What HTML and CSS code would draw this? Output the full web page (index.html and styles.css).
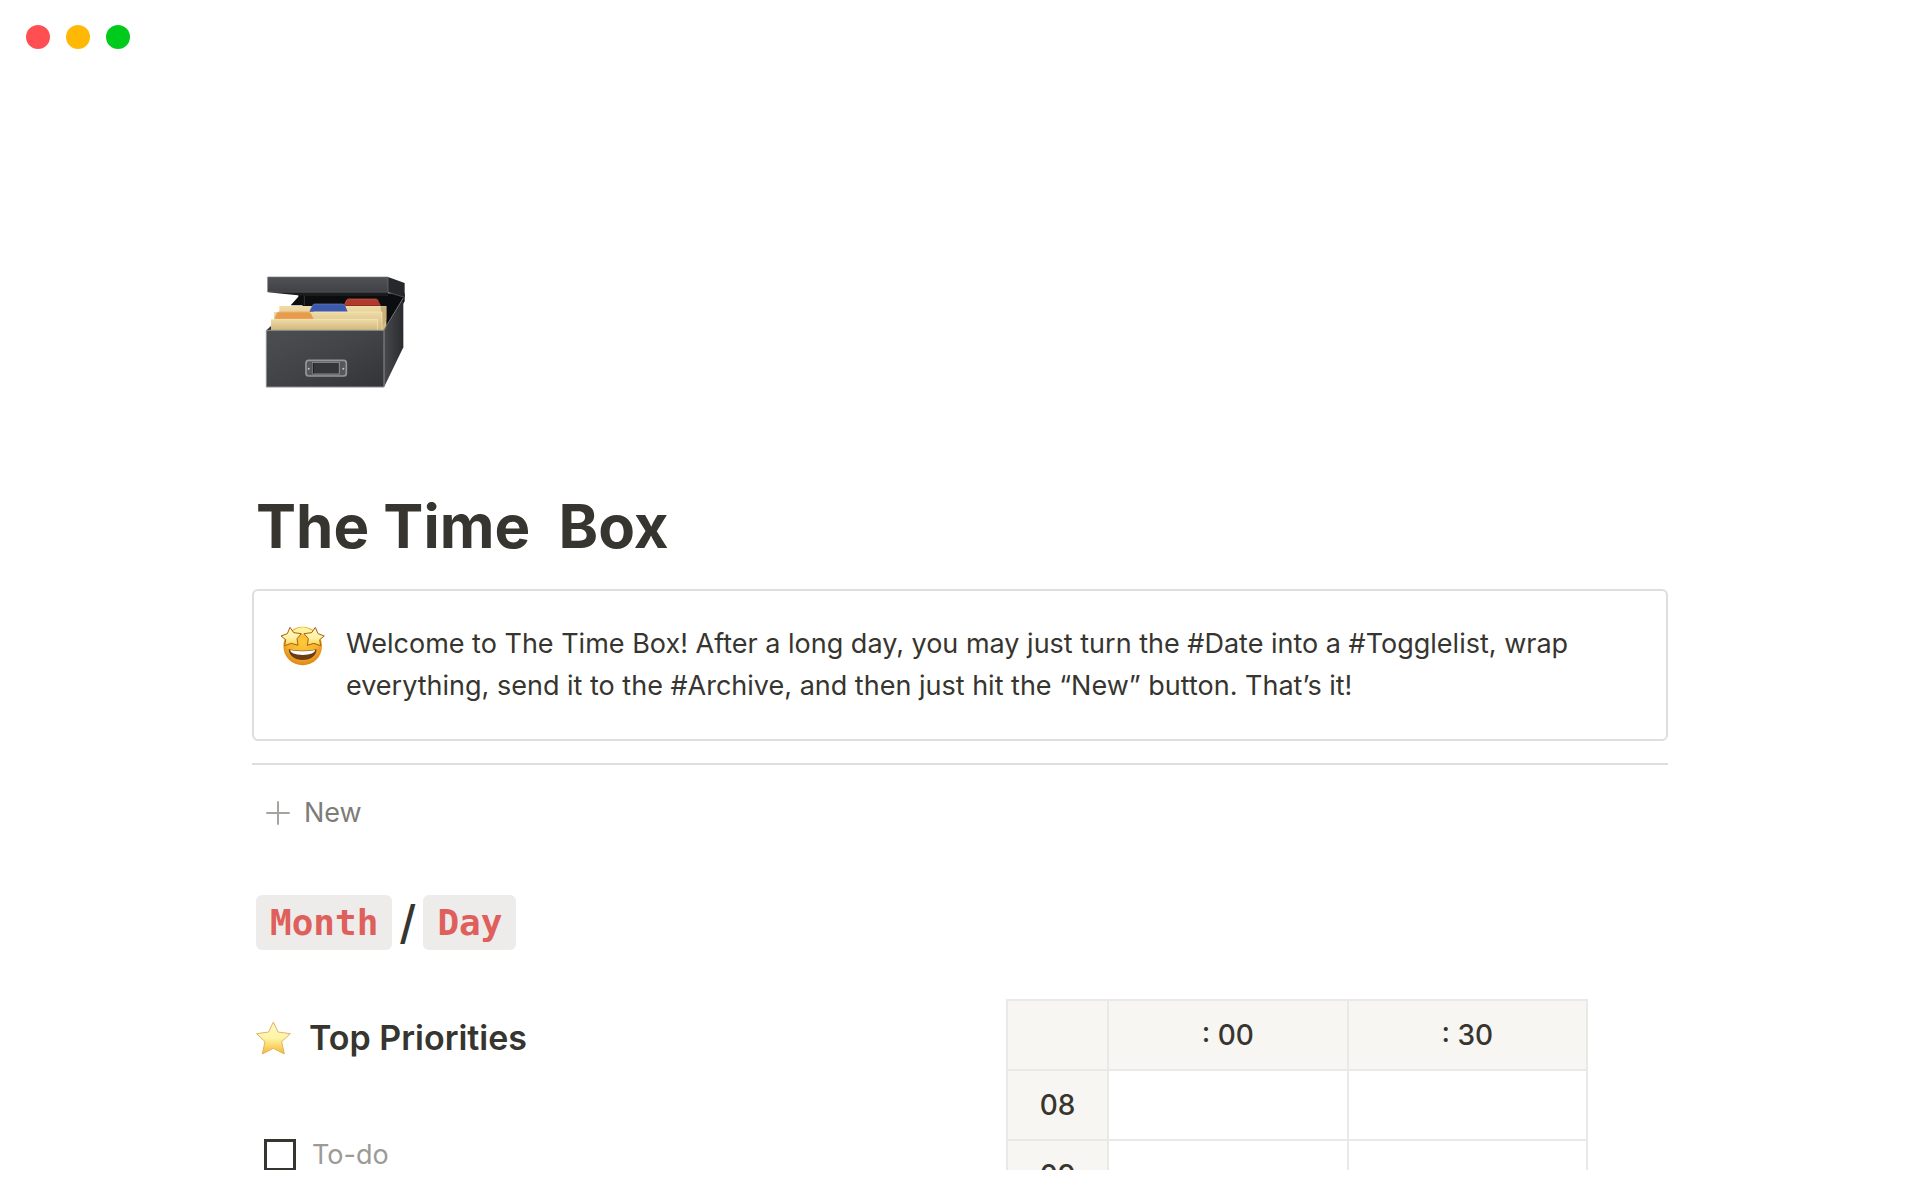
FILE: index.html
```html
<!DOCTYPE html>
<html lang="en">
<head>
  <meta charset="UTF-8">
  <meta name="viewport" content="width=device-width, initial-scale=1.0">
  <title>The Time Box</title>
  <link rel="stylesheet" href="styles.css">
</head>
<body>
  <header class="titlebar">
    <span class="dot dot-red"></span>
    <span class="dot dot-yellow"></span>
    <span class="dot dot-green"></span>
  </header>
  <main class="page">
    <!-- Card file box -->
    <svg class="page-icon" viewBox="45 45 423 342" aria-hidden="true">
      <defs>
        <linearGradient id="front" x1="0" y1="0" x2="1" y2="1">
          <stop offset="0" stop-color="#4c4e52"/>
          <stop offset="0.5" stop-color="#424347"/>
          <stop offset="1" stop-color="#333438"/>
        </linearGradient>
        <linearGradient id="lid" x1="0" y1="0" x2="0" y2="1">
          <stop offset="0" stop-color="#505256"/>
          <stop offset="1" stop-color="#3f4145"/>
        </linearGradient>
        <linearGradient id="side" x1="0" y1="0" x2="1" y2="0">
          <stop offset="0" stop-color="#48494c"/>
          <stop offset="1" stop-color="#2a2b2e"/>
        </linearGradient>
        <linearGradient id="card" x1="0" y1="0" x2="0" y2="1">
          <stop offset="0" stop-color="#efdba6"/>
          <stop offset="1" stop-color="#cfb67c"/>
        </linearGradient>
      </defs>
      <path d="M145 100H464V124L405 215H140L158 136H122L145 110Z" fill="#0c0d0e"/>
      <path d="M163 100V136" stroke="#333538" stroke-width="3"/>
      <path d="M88 138H409V212H88Z" fill="url(#card)"/>
      <path d="M281 137L290 120Q292 117 297 117H376Q382 117 385 122L393 137Z" fill="#b23a2c"/>
      <path d="M284 133L290 120Q292 117 297 117H376Q382 117 385 122" fill="none" stroke="#cf6255" stroke-width="2"/>
      <path d="M392 139H409V180L396 205Z" fill="#c9b078"/>
      <path d="M72 156H396V212H72Z" fill="url(#card)"/>
      <path d="M178 155L187 137Q189 132 195 132H277Q283 132 286 138L293 155Z" fill="#3d59ad"/>
      <path d="M181 150L187 137Q189 132 195 132H277Q283 132 286 138" fill="none" stroke="#6e84c8" stroke-width="2"/>
      <path d="M63 178H383V212H63Z" fill="url(#card)"/>
      <path d="M74 177L79 160Q81 155 87 155H174Q180 155 183 161L191 177Z" fill="#e79b4d"/>
      <path d="M77 170L80 160Q82 156 88 156H174Q179 156 182 161" fill="none" stroke="#f3bd80" stroke-width="2"/>
      <path d="M63 178H383V212" fill="none" stroke="#f8e8bb" stroke-width="2"/>
      <path d="M191 156H396V212" fill="none" stroke="#f8e8bb" stroke-width="2"/>
      <path d="M49 211L63 198V211Z" fill="#333"/>
      <path d="M402 212L460 116V262L402 382Z" fill="url(#side)"/>
      <path d="M401 211L460 114" stroke="#77797b" stroke-width="3"/>
      <path d="M49 211H402V381H49Z" fill="url(#front)" stroke="#8b8d90" stroke-width="3"/>
      <path d="M414 51L464 69V112L414 97Z" fill="#27282b"/>
      <path d="M53 51H414V97H92L53 96Z" fill="url(#lid)" stroke="#74767a" stroke-width="2"/>
      <path d="M53 97L165 108H414V97Z" fill="#1b1c1e"/>
      <path d="M414 97L464 112" stroke="#68696c" stroke-width="2"/>
      <rect x="168" y="301" width="121" height="47" rx="8" fill="#55575a" stroke="#94979a" stroke-width="5"/>
      <rect x="188" y="307" width="80" height="35" fill="#353639" stroke="#8b8e91" stroke-width="3"/>
      <path d="M190 309V341" stroke="#191a1b" stroke-width="3"/>
      <circle cx="176" cy="326" r="3" fill="#c5c7c9"/>
      <circle cx="280" cy="326" r="3" fill="#c5c7c9"/>
    </svg>

    <h1>The Time&nbsp; Box</h1>

    <section class="callout">
      <!-- Star-struck face -->
      <svg class="callout-icon" viewBox="30 33 135 120" aria-hidden="true">
        <defs>
          <radialGradient id="face" cx="0.5" cy="0.4" r="0.6">
            <stop offset="0" stop-color="#fcc93a"/>
            <stop offset="0.65" stop-color="#f6b12f"/>
            <stop offset="1" stop-color="#dd8418"/>
          </radialGradient>
          <linearGradient id="eye" x1="0" y1="0" x2="0" y2="1">
            <stop offset="0" stop-color="#fffbd0"/>
            <stop offset="0.6" stop-color="#fff0a0"/>
            <stop offset="1" stop-color="#fbd24b"/>
          </linearGradient>
        </defs>
        <circle cx="98" cy="93" r="58" fill="url(#face)"/>
        <path d="M68 48Q98 26 128 48L116 57H80Z" fill="#fff3a0"/>
        <path d="M56 103Q98 112 140 103Q137 134 98 135Q59 134 56 103Z" fill="#6d3d12"/>
        <path d="M60 105Q98 113 136 105Q134 119 98 120Q62 119 60 105Z" fill="#fff"/>
        <path d="M60 37L71 53L94 56L81 71L84 91L64 85L44 92L47 74L33 63L52 56Z" fill="url(#eye)" stroke="#a9620f" stroke-width="3" stroke-linejoin="round"/>
        <path d="M136 37L125 53L102 56L115 71L112 91L132 85L152 92L149 74L163 63L144 56Z" fill="url(#eye)" stroke="#a9620f" stroke-width="3" stroke-linejoin="round"/>
      </svg>
      <p>Welcome to The Time Box! After a long day, you may just turn the #Date into a #Togglelist, wrap everything, send it to the #Archive, and then just hit the “New” button. That’s it!</p>
    </section>

    <hr>

    <button class="new-btn" type="button">
      <svg viewBox="0 0 24 24" aria-hidden="true"><path d="M12 1V23M1 12H23"/></svg>
      New
    </button>

    <h2 class="date"><code>Month</code><span>/</span><code>Day</code></h2>

    <div class="columns">
      <section class="priorities">
        <h3>
          <svg viewBox="48 121 105 102" aria-hidden="true">
            <defs>
              <linearGradient id="star" x1="0" y1="0" x2="0" y2="1">
                <stop offset="0" stop-color="#fff9c4"/>
                <stop offset="0.5" stop-color="#fff4a8"/>
                <stop offset="1" stop-color="#f5b92e"/>
              </linearGradient>
            </defs>
            <path d="M100 124L114 154L151 159L125 183L133 220L100 203L67 220L75 183L50 159L86 154Z" fill="url(#star)" stroke="#e2b360" stroke-width="3" stroke-linejoin="round"/>
          </svg>
          Top Priorities
        </h3>
        <label class="todo"><input type="checkbox"> To-do</label>
      </section>

      <table class="schedule">
        <thead>
          <tr>
            <th class="hour"></th>
            <th>: 00</th>
            <th>: 30</th>
          </tr>
        </thead>
        <tbody>
          <tr>
            <th>08</th>
            <td></td>
            <td></td>
          </tr>
          <tr>
            <th>09</th>
            <td></td>
            <td></td>
          </tr>
        </tbody>
      </table>
    </div>
  </main>
</body>
</html>
```
FILE: styles.css
```css
* {
  box-sizing: border-box;
  margin: 0;
  padding: 0;
}
body {
  display: flex;
  flex-direction: column;
  height: 100vh;
  padding-bottom: 30px;
  overflow: hidden;
  font-family: Inter, "Liberation Sans", sans-serif;
  font-size: 27px;
  line-height: 42px;
  color: #37352f;
  background: #fff;
}

/* Window buttons */
.titlebar {
  display: flex;
  flex: none;
  gap: 16px;
  padding: 25px 26px;
}
.dot {
  width: 24px;
  height: 24px;
  border-radius: 50%;
}
.dot-red {
  background: #ff4f52;
}
.dot-yellow {
  background: #ffb804;
}
.dot-green {
  background: #00ca1b;
}

.page {
  flex: 1;
  min-height: 0;
  width: 100%;
  max-width: 1464px;
  margin: 0 auto;
  padding: 201px 24px 0;
  overflow: hidden;
}
.page-icon {
  display: block;
  width: 141px;
  height: 114px;
  margin-left: 13px;
}
h1 {
  margin: 98px 4px 24px;
  font-size: 60px;
  font-weight: 700;
  line-height: 78px;
}

.callout {
  display: flex;
  gap: 21px;
  padding: 32px 26px;
  border: 2px solid #dededd;
  border-radius: 6px;
}
.callout-icon {
  flex: none;
  width: 45px;
  height: 40px;
  margin-top: 3px;
}
hr {
  margin: 22px 0;
  border: 0;
  border-top: 2px solid #dededd;
}

.new-btn {
  display: flex;
  align-items: center;
  gap: 14px;
  padding: 5px 14px;
  border: 0;
  border-radius: 6px;
  background: none;
  color: #7d7c78;
  font: inherit;
  cursor: pointer;
}
.new-btn svg {
  width: 24px;
  height: 24px;
  stroke: #a5a4a1;
  stroke-width: 2;
  stroke-linecap: round;
}

.date {
  display: flex;
  align-items: center;
  margin: 56px 4px 49px;
  font-size: 46px;
  font-weight: 500;
  line-height: 55px;
}
.date span {
  width: 31px;
  text-align: center;
}
.date code {
  padding: 0 14px;
  border-radius: 6px;
  background: #edecea;
  color: #de5f5c;
  font-family: "DejaVu Sans Mono", monospace;
  font-size: 36px;
  font-weight: 700;
}

.columns {
  display: grid;
  grid-template-columns: 1fr 1fr;
  gap: 92px;
}
.priorities h3 {
  display: flex;
  align-items: center;
  gap: 18px;
  margin: 17px 4px 74px;
  font-size: 34px;
  font-weight: 600;
  line-height: 44px;
}
.priorities h3 svg {
  width: 35px;
  height: 34px;
}
.todo {
  display: flex;
  align-items: center;
  gap: 16px;
  padding-left: 12px;
  color: #9b9a97;
}
.todo input {
  appearance: none;
  width: 32px;
  height: 32px;
  border: 3px solid #37352f;
  cursor: pointer;
}

.schedule {
  width: 582px;
  align-self: start;
  table-layout: fixed;
  border-collapse: collapse;
}
.schedule th,
.schedule td {
  height: 70px;
  border: 2px solid #e9e9e7;
  text-align: center;
}
.schedule th {
  background: #f7f6f3;
  font-size: 28px;
  font-weight: 500;
}
.schedule .hour {
  width: 101px;
}
```
